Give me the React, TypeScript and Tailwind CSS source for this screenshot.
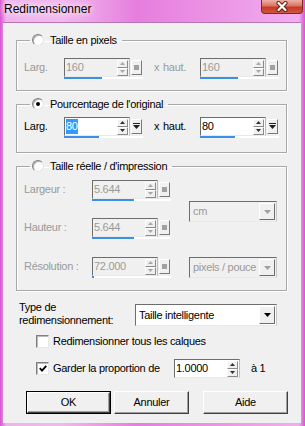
import React from 'react';

const Arrow = ({ up, color }: { up?: boolean; color: string }) => (
  <svg width="5" height="3" viewBox="0 0 5 3">
    <polygon points={up ? '2.5,0 5,3 0,3' : '0,0 5,0 2.5,3'} fill={color} />
  </svg>
);

const SpinBtn = ({ up, disabled }: { up?: boolean; disabled?: boolean }) => (
  <div className="flex h-[8px] w-[11px] items-center justify-center border border-t-white border-l-white border-r-[#8a8a8a] border-b-[#8a8a8a] bg-[#f0f0f0]">
    <Arrow up={up} color={disabled ? '#a8a8a8' : '#303030'} />
  </div>
);

interface SpinProps {
  value: string;
  disabled?: boolean;
  selected?: boolean;
  bar?: number;
  square?: boolean;
}

const SpinField = ({ value, disabled, selected, bar, square = true }: SpinProps) => (
  <div className="flex flex-col">
    <div className="flex items-center">
      <div
        className={`flex h-[19px] w-[66px] border border-t-[#6d6d6d] border-l-[#6d6d6d] border-r-[#bdbdbd] border-b-[#e8e8e8] ${
          disabled ? 'bg-[#f0f0f0]' : 'bg-white'
        }`}
      >
        <div className="flex flex-1 items-center pl-[1px]">
          {selected ? (
            <span className="flex h-[15px] items-center bg-[#3399ff] text-white">{value}</span>
          ) : (
            <span className={disabled ? 'text-[#9a9a9a]' : 'text-black'}>{value}</span>
          )}
        </div>
        <div className="mr-[1px] flex flex-col justify-center">
          <SpinBtn up disabled={disabled} />
          <SpinBtn disabled={disabled} />
        </div>
      </div>
      {square && (
        <div className="ml-[1px] flex h-[15px] w-[11px] items-center justify-center border border-t-white border-l-white border-r-[#7a7a7a] border-b-[#7a7a7a] bg-[#f0f0f0]">
          {disabled ? (
            <div className="h-[5px] w-[5px] bg-[#a0a0a0]" />
          ) : (
            <svg width="7" height="7" viewBox="0 0 7 7">
              <rect x="0" y="0" width="7" height="1" fill="#202020" />
              <polygon points="0,2 7,2 3.5,6" fill="#202020" />
            </svg>
          )}
        </div>
      )}
    </div>
    {bar !== undefined && (
      <div className="h-[2px] w-[79px] bg-white">
        <div className="h-[2px] bg-[#3a8fe8]" style={{ width: bar }} />
      </div>
    )}
  </div>
);

const Drop = ({ value, disabled, className }: { value: string; disabled?: boolean; className: string }) => (
  <div
    className={`flex items-center border border-t-[#6d6d6d] border-l-[#6d6d6d] border-r-[#c8c8c8] border-b-[#e8e8e8] ${
      disabled ? 'bg-[#f0f0f0]' : 'bg-white'
    } ${className}`}
  >
    <span className={`flex-1 overflow-hidden whitespace-nowrap pl-[3px] ${disabled ? 'text-[#9a9a9a]' : 'text-black'}`}>
      {value}
    </span>
    <div className="mr-[1px] flex h-[calc(100%-2px)] w-[16px] shrink-0 items-center justify-center border border-t-white border-l-white border-r-[#6d6d6d] border-b-[#6d6d6d] bg-[#f0f0f0]">
      <svg width="7" height="4" viewBox="0 0 7 4">
        <polygon points="0,0 7,0 3.5,4" fill={disabled ? '#a0a0a0' : '#000'} />
      </svg>
    </div>
  </div>
);

const Radio = ({ checked }: { checked?: boolean }) => (
  <div className="flex h-[12px] w-[12px] items-center justify-center rounded-full border border-t-[#808080] border-l-[#808080] border-r-[#e4e4e4] border-b-[#e4e4e4] bg-white shadow-[inset_1px_1px_0_#b0b0b0]">
    {checked && <div className="h-[4px] w-[4px] rounded-full bg-black" />}
  </div>
);

const Check = ({ checked }: { checked?: boolean }) => (
  <div className="flex h-[13px] w-[13px] items-center justify-center border border-t-[#808080] border-l-[#808080] border-r-[#e8e8e8] border-b-[#e8e8e8] bg-white shadow-[inset_1px_1px_0_#b8b8b8]">
    {checked && (
      <svg width="8" height="7" viewBox="0 0 8 7">
        <path d="M0.8 3.2 L3 5.6 L7.3 0.8" stroke="#000" strokeWidth="1.8" fill="none" />
      </svg>
    )}
  </div>
);

const Btn = ({ label, w, def }: { label: string; w: string; def?: boolean }) => (
  <div className={`h-[23px] ${w} ${def ? 'border border-black' : ''}`}>
    <div className="flex h-full w-full items-center justify-center border border-t-white border-l-white border-r-[#404040] border-b-[#404040] bg-[#f0f0f0] shadow-[inset_-1px_-1px_0_#a0a0a0] text-black">
      {label}
    </div>
  </div>
);

const Legend = ({ label, checked, disabled }: { label: string; checked?: boolean; disabled?: boolean }) => (
  <legend className="ml-[6px] px-[2px] pr-[5px]">
    <div className="flex h-[14px] items-center gap-[6px]">
      <Radio checked={checked} />
      <span className={disabled ? 'text-[#9a9a9a]' : 'text-black'}>{label}</span>
    </div>
  </legend>
);

const Group = ({ children, className }: { children: React.ReactNode; className: string }) => (
  <fieldset className={`ml-[13px] w-[271px] border border-[#a8a8a8] pl-[7px] shadow-[inset_1px_1px_0_#fff,1px_1px_0_#fff] ${className}`}>
    {children}
  </fieldset>
);

const SizeRow = ({ value, disabled, selected, bar }: { value: string; disabled?: boolean; selected?: boolean; bar: number }) => {
  const txt = disabled ? 'text-[#9a9a9a]' : 'text-black';
  return (
    <div className="flex items-start">
      <span className={`w-[40px] leading-[19px] ${txt}`}>Larg.</span>
      <SpinField value={value} disabled={disabled} selected={selected} bar={bar} />
      <span className={`ml-[11px] w-[9px] leading-[19px] ${txt}`}>x</span>
      <span className={`w-[37px] leading-[19px] ${txt}`}>haut.</span>
      <SpinField value={value} disabled={disabled} bar={bar} />
    </div>
  );
};

export default function App() {
  return (
    <div className="flex h-[426px] w-[305px] flex-col bg-[linear-gradient(90deg,#d653cf_0%,#f0b2ec_2%,#f2b8ee_20%,#e67ede_45%,#ec98e6_75%,#f2aef0_98%,#d653cf_100%)] font-['Liberation_Sans',Arial,sans-serif] text-[11px] tracking-[-0.3px]">
      {/* Title bar */}
      <div className="flex h-[22px] items-start justify-between">
        <span className="pl-[4px] pt-[2px] text-[12px] leading-[14px] tracking-normal text-black [text-shadow:0_0_6px_#fff,0_0_10px_#fff]">
          Redimensionner
        </span>
        <div className="mr-[2px] flex h-[14px] w-[42px] items-center justify-center rounded-b-[4px] border border-t-0 border-[#7e2a20] bg-[linear-gradient(180deg,#eeb0a2_0%,#d97464_45%,#c33a26_55%,#d2563f_100%)]">
          <svg width="14" height="11" viewBox="0 0 14 11">
            <path d="M3.5 2 L10.5 9 M10.5 2 L3.5 9" stroke="#5a1d14" strokeWidth="4" strokeLinecap="round" />
            <path d="M3.5 2 L10.5 9 M10.5 2 L3.5 9" stroke="#fff" strokeWidth="2.2" strokeLinecap="round" />
          </svg>
        </div>
      </div>

      {/* Client area */}
      <div className="mb-[3px] ml-[3px] mr-[4px] flex flex-1 flex-col border-t border-[#b876b4] bg-[#f0f0f0]">
        <Group className="mt-[10px] pb-[11px] pt-[11px]">
          <Legend label="Taille en pixels" />
          <SizeRow value="160" disabled bar={38} />
        </Group>

        <Group className="mt-[6px] pb-[14px] pt-[6px]">
          <Legend label="Pourcentage de l'original" checked />
          <SizeRow value="80" selected bar={35} />
        </Group>

        <Group className="mt-[6px] pb-[12px] pt-[7px]">
          <Legend label="Taille réelle / d'impression" />
          <div className="flex items-start">
            <div className="flex flex-col gap-[17px]">
              <div className="flex items-start">
                <span className="w-[68px] leading-[19px] text-[#9a9a9a]">Largeur :</span>
                <SpinField value="5.644" disabled bar={42} />
              </div>
              <div className="flex items-start">
                <span className="w-[68px] leading-[19px] text-[#9a9a9a]">Hauteur :</span>
                <SpinField value="5.644" disabled bar={42} />
              </div>
              <div className="mt-[1px] flex items-start">
                <span className="w-[68px] leading-[19px] text-[#9a9a9a]">Résolution :</span>
                <SpinField value="72.000" disabled bar={2} />
              </div>
            </div>
            <div className="ml-[18px] flex flex-col">
              <Drop value="cm" disabled className="mt-[21px] h-[21px] w-[88px]" />
              <Drop value="pixels / pouce" disabled className="mt-[35px] h-[21px] w-[88px]" />
            </div>
          </div>
        </Group>

        {/* Type de redimensionnement */}
        <div className="ml-[16px] mt-[10px] flex items-start">
          <span className="w-[116px] leading-[13px] text-black">
            Type de
            <br />
            redimensionnement:
          </span>
          <Drop value="Taille intelligente" className="mt-[3px] h-[22px] w-[142px]" />
        </div>

        <div className="ml-[33px] mt-[8px] flex h-[13px] items-center gap-[4px]">
          <Check />
          <span className="text-black">Redimensionner tous les calques</span>
        </div>

        <div className="ml-[33px] mt-[11px] flex items-center">
          <Check checked />
          <span className="ml-[4px] w-[121px] text-black">Garder la proportion de</span>
          <SpinField value="1.0000" square={false} />
          <span className="ml-[11px] text-black">à 1</span>
        </div>

        {/* Buttons */}
        <div className="ml-[23px] mt-[13px] flex">
          <Btn label="OK" w="w-[85px]" def />
          <div className="ml-[3px]">
            <Btn label="Annuler" w="w-[75px]" />
          </div>
          <div className="ml-[14px]">
            <Btn label="Aide" w="w-[85px]" />
          </div>
        </div>
      </div>
    </div>
  );
}
